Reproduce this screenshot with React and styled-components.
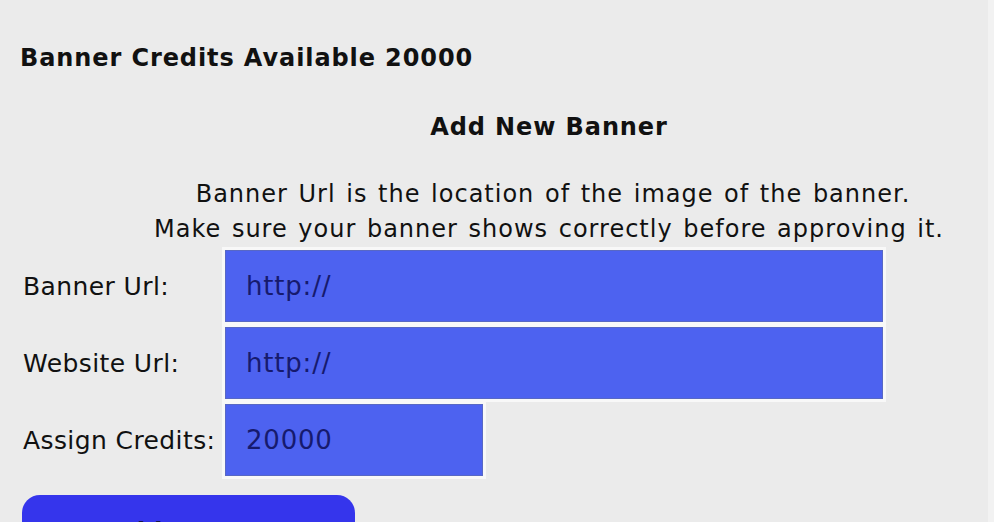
import React from "react";
import styled, { createGlobalStyle } from "styled-components";

const GlobalStyle = createGlobalStyle`
  html, body {
    margin: 0;
    padding: 0;
    background: #ebebeb;
    overflow: hidden;
  }
  body {
    font-family: "DejaVu Sans", Verdana, sans-serif;
    color: #111;
  }
`;

const Page = styled.div`
  width: 994px;
  height: 522px;
  box-sizing: border-box;
  padding: 43px 0 0 20px;
  background: #ebebeb;
  border-right: 6px solid #f2f2f2;
  overflow: hidden;
`;

const Credits = styled.h2`
  margin: 0;
  font-size: 24px;
  font-weight: 700;
  letter-spacing: 0.9px;
  line-height: 30px;
`;

const Title = styled.h3`
  margin: 39px 0 0;
  padding-left: 90px;
  text-align: center;
  font-size: 24px;
  font-weight: 700;
  letter-spacing: 0.9px;
  line-height: 30px;
`;

const Note = styled.p`
  margin: 35px 0 0;
  padding-left: 90px;
  text-align: center;
  font-size: 24px;
  letter-spacing: 1px;
  word-spacing: 2px;
  line-height: 35px;
`;

const NoteLine = styled.span`
  display: block;
  padding-left: ${(p) => p.$shift || 0}px;
`;

const Form = styled.div`
  display: grid;
  grid-template-columns: 205px auto;
  justify-content: start;
  row-gap: 5px;
  margin-top: 3px;
`;

const Label = styled.label`
  align-self: center;
  padding-left: 3px;
  font-size: 25px;
  letter-spacing: 0.4px;
  white-space: nowrap;
`;

const Field = styled.input`
  box-sizing: border-box;
  width: ${(p) => p.$w}px;
  height: 72px;
  margin: 0;
  padding: 0 0 0 20px;
  border: 1px solid #5868c4;
  background: #4d62f0;
  box-shadow: 0 0 0 3px #f8f8f8;
  color: #161a6e;
  font-family: "DejaVu Sans", Verdana, sans-serif;
  font-size: 26px;
  letter-spacing: 0.8px;
  outline: none;
`;

const Submit = styled.button`
  display: block;
  width: 333px;
  height: 60px;
  margin: 19px 0 0 2px;
  padding: 14px 0 0;
  border: none;
  border-radius: 18px 18px 0 0;
  background: #3535ec;
  color: #151548;
  font-family: "DejaVu Sans", Verdana, sans-serif;
  font-size: 24px;
  font-weight: 700;
  text-align: center;
  vertical-align: top;
`;

export default function App() {
  return (
    <>
      <GlobalStyle />
      <Page>
        <Credits>Banner Credits Available 20000</Credits>
        <Title>Add New Banner</Title>
        <Note>
          <NoteLine $shift={8}>
            Banner Url is the location of the image of the banner.
          </NoteLine>
          <NoteLine>
            Make sure your banner shows correctly before approving it.
          </NoteLine>
        </Note>
        <Form>
          <Label>Banner Url:</Label>
          <Field $w={658} defaultValue="http://" />
          <Label>Website Url:</Label>
          <Field $w={658} defaultValue="http://" />
          <Label>Assign Credits:</Label>
          <Field $w={258} defaultValue="20000" />
        </Form>
        <Submit>Add Banner</Submit>
      </Page>
    </>
  );
}
